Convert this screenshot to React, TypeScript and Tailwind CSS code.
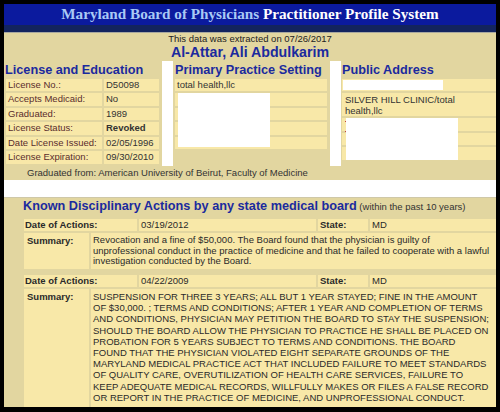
import React from "react";

const cell = "bg-[#f8e8a8] h-[12.5px] leading-[12.5px] px-[2px] whitespace-nowrap overflow-hidden";

function Row({ label, value, bold }: { label: string; value: string; bold?: boolean }) {
  return (
    <div className="flex gap-[2px]">
      <div className={`${cell} w-[96px] text-[#5a2d2d]`}>{label}</div>
      <div className={`${cell} flex-1 text-[#333] ${bold ? "font-bold" : ""}`}>{value}</div>
    </div>
  );
}

const sum1 = [
  "Revocation and a fine of $50,000. The Board found that the physician is guilty of",
  "unprofessional conduct in the practice of medicine and that he failed to cooperate with a lawful",
  "investigation conducted by the Board.",
];

const sum2 = [
  "SUSPENSION FOR THREE 3 YEARS; ALL BUT 1 YEAR STAYED; FINE IN THE AMOUNT",
  "OF $30,000. ; TERMS AND CONDITIONS; AFTER 1 YEAR AND COMPLETION OF TERMS",
  "AND CONDITIONS, PHYSICIAN MAY PETITION THE BOARD TO STAY THE SUSPENSION;",
  "SHOULD THE BOARD ALLOW THE PHYSICIAN TO PRACTICE HE SHALL BE PLACED ON",
  "PROBATION FOR 5 YEARS SUBJECT TO TERMS AND CONDITIONS. THE BOARD",
  "FOUND THAT THE PHYSICIAN VIOLATED EIGHT SEPARATE GROUNDS OF THE",
  "MARYLAND MEDICAL PRACTICE ACT THAT INCLUDED FAILURE TO MEET STANDARDS",
  "OF QUALITY CARE, OVERUTILIZATION OF HEALTH CARE SERVICES, FAILURE TO",
  "KEEP ADEQUATE MEDICAL RECORDS, WILLFULLY MAKES OR FILES A FALSE RECORD",
  "OR REPORT IN THE PRACTICE OF MEDICINE, AND UNPROFESSIONAL CONDUCT.",
];

const dcell = "bg-[#f8e8a8] h-[12px] leading-[12px] whitespace-nowrap overflow-hidden";

function DateRow({ date }: { date: string }) {
  return (
    <div className="flex gap-[2px]">
      <div className={`${dcell} w-[113px] pl-[1px] font-bold`}>Date of Actions:</div>
      <div className={`${dcell} w-[177px] pl-[2px]`}>{date}</div>
      <div className={`${dcell} w-[50px] pl-[2px] font-bold`}>State:</div>
      <div className={`${dcell} flex-1 pl-[2px]`}>MD</div>
    </div>
  );
}

function SummaryRow({ lines, h, lead }: { lines: string[]; h: string; lead: string }) {
  return (
    <div className={`flex gap-[2px] ${h}`}>
      <div className="bg-[#f8e8a8] w-[65px] pl-[3px] pt-[2px] leading-[11px] font-bold">Summary:</div>
      <div className={`bg-[#f8e8a8] flex-1 pl-[2px] pt-[2px] whitespace-nowrap overflow-hidden ${lead}`}>
        {lines.map((l, i) => (
          <div key={i}>{l}</div>
        ))}
      </div>
    </div>
  );
}

export default function App() {
  return (
    <div className="w-[500px] h-[412px] bg-black pt-[4px] pl-[4px] pr-[4px] pb-[5px] flex flex-col overflow-hidden font-['Liberation_Sans',Arial,sans-serif] text-[9.5px] text-[#2a2a2a]">
      <div className="flex-1 flex flex-col bg-[#e2d6a0] overflow-hidden">
        {/* header */}
        <div className="h-[21px] bg-[#0b1a9e] flex items-center justify-center font-['Liberation_Serif',serif] font-bold text-[15.2px] whitespace-nowrap">
          <span className="text-[#a9c9f5]">Maryland Board of Physicians</span>
          <span className="text-white">&nbsp;Practitioner Profile System</span>
        </div>
        <div className="h-[7px] bg-[#13245e]" />
        <div className="h-[1px] bg-[#a8a8a0]" />

        {/* top info */}
        <div className="text-center leading-[11px] text-[#222]">This data was extracted on 07/26/2017</div>
        <div className="text-center leading-[16px] text-[14.2px] font-bold text-[#1b2a9e]">Al-Attar, Ali Abdulkarim</div>

        <div className="flex h-[106px] mt-[1px]">
          {/* left column */}
          <div className="w-[158px] flex flex-col">
            <div className="pl-[1px] leading-[16px] text-[12.7px] font-bold text-[#1b2a9e] whitespace-nowrap mt-[1px]">License and Education</div>
            <div className="flex flex-col gap-[2px] pl-[2px] pr-[3px] mt-[0.75px]">
              <Row label="License No.:" value="D50098" />
              <Row label="Accepts Medicaid:" value="No" />
              <Row label="Graduated:" value="1989" />
              <Row label="License Status:" value="Revoked" bold />
              <Row label="Date License Issued:" value="02/05/1996" />
              <Row label="License Expiration:" value="09/30/2010" />
            </div>
          </div>
          <div className="w-[11px] bg-white" />
          {/* middle column */}
          <div className="w-[157px] flex flex-col">
            <div className="pl-[2px] leading-[16px] text-[12.7px] font-bold text-[#1b2a9e] whitespace-nowrap mt-[1px]">Primary Practice Setting</div>
            <div className="flex flex-col gap-[2px] pl-[2px] pr-[3px] mt-[0.75px]">
              <div className={`${cell} text-[#333]`}>total health,llc</div>
              <div className="relative flex flex-col gap-[2px]">
                <div className={cell} />
                <div className={cell} />
                <div className={cell} />
                <div className={cell} />
                <div className="absolute left-[3px] top-0 w-[92px] bottom-[2px] bg-white" />
              </div>
            </div>
          </div>
          <div className="w-[11px] bg-white" />
          {/* right column */}
          <div className="flex-1 flex flex-col">
            <div className="pl-[1px] leading-[16px] text-[12.7px] font-bold text-[#1b2a9e] whitespace-nowrap mt-[1px]">Public Address</div>
            <div className="flex flex-col gap-[2px] pl-[1px] mt-[0.75px]">
              <div className="bg-[#f8e8a8] h-[12.5px] py-[1px] pl-[1px]">
                <div className="bg-white w-[100px] h-full" />
              </div>
              <div className="bg-[#f8e8a8] h-[23px] leading-[11px] px-[3px] pt-[1px] text-[#333]">
                SILVER HILL CLINIC/total
                <br />
                health,llc
              </div>
              <div className="relative flex flex-col gap-[2px]">
                <div className={cell} />
                <div className={cell} />
                <div className={cell} />
                <div className="absolute left-[4px] top-0 w-[112px] bottom-0 bg-white" />
                <div className="absolute left-[3px] top-[3px] w-[1px] h-[1px] bg-[#c04040]" />
                <div className="absolute left-[3px] top-[13px] w-[1px] h-[1px] bg-[#c04040]" />
              </div>
            </div>
          </div>
        </div>

        <div className="h-[14px] leading-[14px] pl-[23px] text-[#333] whitespace-nowrap">
          Graduated from: American University of Beirut, Faculty of Medicine
        </div>
        <div className="h-[17px] bg-white" />
        <div className="h-[1px] bg-[#cfc8a8]" />

        {/* disciplinary */}
        <div className="flex flex-col pl-[19px]">
          <div className="leading-[16px] whitespace-nowrap">
            <span className="text-[12.7px] font-bold text-[#1b2a9e]">Known Disciplinary Actions by any state medical board</span>
            <span className="text-[9.5px] text-[#333]"> (within the past 10 years)</span>
          </div>
          <div className="flex flex-col gap-[2px] mt-[4px] pl-[1px]">
            <DateRow date="03/19/2012" />
            <SummaryRow lines={sum1} h="h-[36px]" lead="leading-[10.6px]" />
            <div className="h-[2px]" />
            <DateRow date="04/22/2009" />
            <SummaryRow lines={sum2} h="h-[118px]" lead="leading-[11.2px]" />
          </div>
        </div>
      </div>
    </div>
  );
}
